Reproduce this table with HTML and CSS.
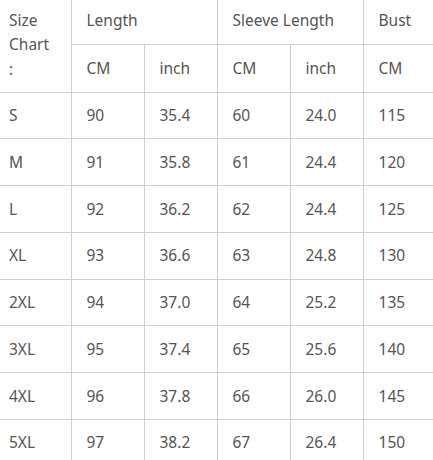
FILE: index.html
```html
<!DOCTYPE html>
<html lang="en">
<head>
<meta charset="utf-8">
<title>Size Chart</title>
<link rel="stylesheet" href="styles.css">
</head>
<body>
<table class="chart">
  <colgroup>
    <col class="c-size">
    <col class="c-val"><col class="c-val"><col class="c-val"><col class="c-val"><col class="c-val">
  </colgroup>
  <thead>
    <tr class="h1">
      <th rowspan="2" class="first">Size<br>Chart<br>:</th>
      <th colspan="2">Length</th>
      <th colspan="2">Sleeve Length</th>
      <th>Bust</th>
    </tr>
    <tr class="h2">
      <th>CM</th><th>inch</th><th>CM</th><th>inch</th><th>CM</th>
    </tr>
  </thead>
  <tbody>
    <tr><td class="first">S</td><td>90</td><td>35.4</td><td>60</td><td>24.0</td><td>115</td></tr>
    <tr><td class="first">M</td><td>91</td><td>35.8</td><td>61</td><td>24.4</td><td>120</td></tr>
    <tr><td class="first">L</td><td>92</td><td>36.2</td><td>62</td><td>24.4</td><td>125</td></tr>
    <tr><td class="first">XL</td><td>93</td><td>36.6</td><td>63</td><td>24.8</td><td>130</td></tr>
    <tr><td class="first">2XL</td><td>94</td><td>37.0</td><td>64</td><td>25.2</td><td>135</td></tr>
    <tr><td class="first">3XL</td><td>95</td><td>37.4</td><td>65</td><td>25.6</td><td>140</td></tr>
    <tr><td class="first">4XL</td><td>96</td><td>37.8</td><td>66</td><td>26.0</td><td>145</td></tr>
    <tr><td class="first">5XL</td><td>97</td><td>38.2</td><td>67</td><td>26.4</td><td>150</td></tr>
  </tbody>
</table>
</body>
</html>
```
FILE: styles.css
```css
html, body {
  margin: 0;
  padding: 0;
  background: #ffffff;
  overflow: hidden;
}
body {
  width: 433px;
  height: 460px;
  font-family: "Noto Sans", "Open Sans", "Liberation Sans", sans-serif;
  font-size: 15.5px;
  color: #555555;
}
.chart {
  border-collapse: collapse;
  table-layout: fixed;
  width: 436px;
  margin-top: -3px;
}
.c-size { width: 71px; }
.c-val { width: 73px; }
.chart th, .chart td {
  border: 1px solid #cfcfcf;
  font-weight: normal;
  text-align: left;
  vertical-align: middle;
  padding: 0 0 0 15px;
  line-height: 24.5px;
  white-space: nowrap;
}
.chart .first {
  padding-left: 9px;
  border-left: none;
}
.chart tr > :last-child { border-right: none; }
.chart thead tr.h1 > * { border-top: none; height: 46.5px; }
.chart .h2 th { height: 47px; }
.chart tbody td { height: 45.75px; }
```
